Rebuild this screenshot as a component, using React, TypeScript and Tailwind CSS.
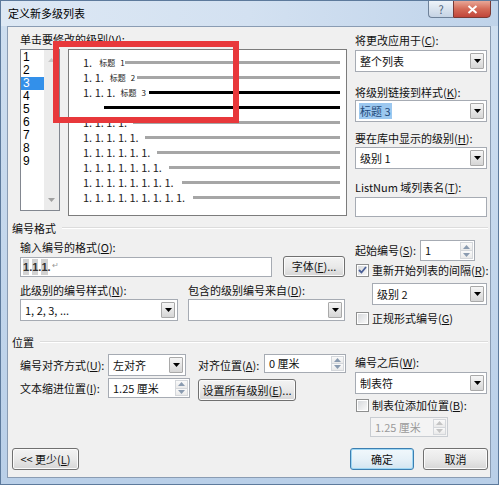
import React from "react";

const Tri = ({ up = false, color = "#000" }: { up?: boolean; color?: string }) => (
  <svg width="7" height="4" viewBox="0 0 7 4">
    {up ? <polygon points="0,4 7,4 3.5,0" fill={color} /> : <polygon points="0,0 7,0 3.5,4" fill={color} />}
  </svg>
);

const Label = ({ className = "", children }: { className?: string; children: React.ReactNode }) => (
  <div className={"flex items-center h-[16px] leading-[16px] whitespace-nowrap " + className}>{children}</div>
);

const Select = ({ className = "", children }: { className?: string; children?: React.ReactNode }) => (
  <div className={"flex items-stretch bg-white border border-[#a6abb3] " + className}>
    <div className="flex-1 flex items-center pl-[4px] overflow-hidden whitespace-nowrap">{children}</div>
    <div className="my-[2px] mr-[2px] w-[14px] flex items-center justify-center border border-[#a9a9a9] rounded-[1px] bg-linear-to-b from-[#f6f6f6] to-[#d6d6d6]">
      <Tri />
    </div>
  </div>
);

const Spin = ({ className = "", children, disabled = false }: { className?: string; children?: React.ReactNode; disabled?: boolean }) => (
  <div className={"flex items-stretch border " + (disabled ? "bg-[#f4f4f4] border-[#c9cdd2] text-[#9a9a9a] " : "bg-white border-[#a6abb3] ") + className}>
    <div className="flex-1 flex items-center pl-[4px] whitespace-nowrap">{children}</div>
    <div className="flex flex-col w-[13px] my-[1px] mr-[1px]">
      <div className="flex-1 flex items-center justify-center border border-[#d4d7db] bg-linear-to-b from-[#fafafa] to-[#eaeaea]">
        <Tri up color={disabled ? "#c4c4c4" : "#8a9bb0"} />
      </div>
      <div className="flex-1 flex items-center justify-center border border-t-0 border-[#d4d7db] bg-linear-to-b from-[#fafafa] to-[#eaeaea]">
        <Tri color={disabled ? "#c4c4c4" : "#8a9bb0"} />
      </div>
    </div>
  </div>
);

const Button = ({ className = "", children, def = false }: { className?: string; children: React.ReactNode; def?: boolean }) => (
  <div
    className={
      "flex items-center justify-center rounded-[3px] border whitespace-nowrap " +
      (def
        ? "border-[#3c7fb1] bg-linear-to-b from-[#f1f8fc] via-[#e6f1f8] to-[#d2e5f1] shadow-[inset_0_0_0_1px_#9ed6f3] "
        : "border-[#707070] bg-linear-to-b from-[#f3f3f3] via-[#e9e9e9] to-[#d6d6d6] shadow-[inset_0_0_0_1px_#fbfbfb] ") +
      className
    }
  >
    {children}
  </div>
);

const Check = ({ checked = false }: { checked?: boolean }) => (
  <div className="w-[13px] h-[13px] border border-[#8e8f8f] bg-white p-[1px] shrink-0">
    <div className="w-full h-full bg-linear-to-br from-[#d7d9dc] to-[#f8f8f8] flex items-center justify-center">
      {checked && (
        <svg width="9" height="8" viewBox="0 0 9 8">
          <path d="M1 4 L3.5 6.5 L8 1" stroke="#4a5f97" strokeWidth="1.8" fill="none" />
        </svg>
      )}
    </div>
  </div>
);

const Header = ({ className = "", children }: { className?: string; children: React.ReactNode }) => (
  <div className={"-ml-[8px] flex items-center h-[16px] " + className}>
    <span className="whitespace-nowrap">{children}</span>
    <div className="flex-1 ml-[6px] border-t border-[#dcdcdc] border-b border-b-white"></div>
  </div>
);

const PreviewRow = ({ textW, children, dark = false }: { textW: string; children?: React.ReactNode; dark?: boolean }) => (
  <div className="flex items-center h-[15px] pl-[14px] pr-[6px]">
    <div className={"flex items-center whitespace-nowrap text-[11px] text-[#222] " + textW}>{children}</div>
    <div className={"flex-1 h-[3px] " + (dark ? "bg-black" : "bg-[#a6a6a6]")}></div>
  </div>
);

export default function App() {
  const levels = ["1", "2", "3", "4", "5", "6", "7", "8", "9"];
  return (
    <div className="relative w-[499px] h-[485px] overflow-hidden bg-linear-to-b from-[#cfdff0] to-[#b9cfe8] border border-[#5d7a9c] text-[11px] text-[#111] [font-family:'Noto_Sans_CJK_SC',sans-serif]">
      {/* Title bar */}
      <div className="flex h-[25px] items-start bg-linear-to-r from-[#dde8f4] via-[#d3e1f1] to-[#bfd3ea]">
        <div className="pl-[7px] pt-[4px] leading-[16px] text-[11px] text-black">定义新多级列表</div>
        <div className="flex-1"></div>
        <div className="w-[25px] h-[18px] -mt-[1px] border border-[#6e8199] border-r-0 rounded-bl-[4px] bg-linear-to-b from-[#eef3f9] to-[#c5d3e4] flex items-center justify-center text-[11px] text-[#4a5f7a] leading-none">?</div>
        <div className="w-[38px] h-[18px] -mt-[1px] border border-[#7a3a35] rounded-br-[4px] bg-linear-to-b from-[#e8a797] via-[#d46a57] to-[#c0453a] flex items-center justify-center mr-[7px]">
          <svg width="11" height="9" viewBox="0 0 11 9">
            <path d="M1.5 1 L9.5 8 M9.5 1 L1.5 8" stroke="#fff" strokeWidth="2" />
          </svg>
        </div>
      </div>

      {/* Client area */}
      <div className="ml-[6px] w-[484px] h-[452px] bg-[#f0f0f0] border border-[#8a9cb3] pl-[12px] pr-[2px] flex flex-col">
        {/* Row A */}
        <div className="flex mt-[4px]">
          <div className="w-[327px] flex flex-col">
            <Label>单击要修改的级别(<u>V</u>):</Label>
            <div className="flex mt-[2px]">
              <div className="w-[40px] h-[162px] bg-white border border-[#828790] flex">
                <div className="flex-1 flex flex-col pt-[1px]">
                  {levels.map((l) => (
                    <div
                      key={l}
                      className={
                        "h-[13px] leading-[13px] pl-[2px] text-[12px] [font-family:'Liberation_Sans',sans-serif] " +
                        (l === "3" ? "bg-[#3390ea] text-white" : "text-black")
                      }
                    >
                      {l}
                    </div>
                  ))}
                </div>
                <div className="w-[15px] bg-[#ececec] flex flex-col items-center justify-between pt-[8px] pb-[8px]">
                  <Tri up color="#c8c8c8" />
                  <Tri color="#a0a0a0" />
                </div>
              </div>
              <div className="ml-[8px] w-[279px] h-[167px] bg-white border border-[#7c7c7c] pt-[5px]">
                <PreviewRow textW="w-[42px]">
                  <span>1.</span>
                  <span className="ml-[7px] text-[8px]">标题</span>
                  <span className="ml-[5px] text-[8px]">1</span>
                </PreviewRow>
                <PreviewRow textW="w-[54px]">
                  <span>1. 1.</span>
                  <span className="ml-[6px] text-[8px]">标题</span>
                  <span className="ml-[5px] text-[8px]">2</span>
                </PreviewRow>
                <PreviewRow textW="w-[66px]" dark>
                  <span>1. 1. 1.</span>
                  <span className="ml-[5px] text-[8px]">标题</span>
                  <span className="ml-[5px] text-[8px]">3</span>
                </PreviewRow>
                <PreviewRow textW="w-[21px]" dark />
                <PreviewRow textW="w-[50px]">1. 1. 1. 1.</PreviewRow>
                <PreviewRow textW="w-[62px]">1. 1. 1. 1. 1.</PreviewRow>
                <PreviewRow textW="w-[74px]">1. 1. 1. 1. 1. 1.</PreviewRow>
                <PreviewRow textW="w-[86px]">1. 1. 1. 1. 1. 1. 1.</PreviewRow>
                <PreviewRow textW="w-[99px]">1. 1. 1. 1. 1. 1. 1. 1.</PreviewRow>
                <PreviewRow textW="w-[110px]">1. 1. 1. 1. 1. 1. 1. 1. 1.</PreviewRow>
              </div>
            </div>
          </div>
          <div className="ml-[8px] w-[132px] flex flex-col pt-[1px]">
            <Label>将更改应用于(<u>C</u>):</Label>
            <Select className="mt-[2px] h-[22px]">整个列表</Select>
            <Label className="mt-[12px]">将级别链接到样式(<u>K</u>):</Label>
            <Select className="h-[22px]">
              <span className="bg-[#9cc8f0] text-[#234a7a] px-[1px] -ml-[1px]">标题 3</span>
            </Select>
            <Label className="mt-[8px]">要在库中显示的级别(<u>H</u>):</Label>
            <Select className="mt-[1px] h-[22px]">级别 1</Select>
            <Label className="mt-[10px]">ListNum 域列表名(<u>T</u>):</Label>
            <div className="mt-[2px] h-[20px] bg-white border border-[#a6abb3]"></div>
          </div>
        </div>

        {/* 编号格式 */}
        <Header className="mt-[3px]">编号格式</Header>
        <div className="flex">
          <div className="w-[325px] flex flex-col">
            <Label className="mt-[3px]">输入编号的格式(<u>O</u>):</Label>
            <div className="flex mt-[1px] h-[21px]">
              <div className="mt-[1px] w-[252px] h-[20px] bg-white border border-[#a6abb3] flex items-center pl-[2px] text-[11px] font-bold text-[#333] [font-family:'Liberation_Sans',sans-serif]">
                <span className="bg-[#d2d2d2]">1</span>
                <span>.</span>
                <span className="bg-[#d2d2d2]">1</span>
                <span>.</span>
                <span className="bg-[#d2d2d2]">1</span>
                <span>.</span>
                <span className="text-[8px] font-normal text-[#999] ml-[1px] -mt-[3px]">↵</span>
              </div>
              <Button className="ml-[11px] w-[62px] h-[21px]">
                字体(<u>F</u>)...
              </Button>
            </div>
            <div className="flex mt-[5px]">
              <Label className="w-[168px]">此级别的编号样式(<u>N</u>):</Label>
              <Label>包含的级别编号来自(<u>D</u>):</Label>
            </div>
            <div className="flex mt-[1px]">
              <Select className="w-[158px] h-[22px]">1, 2, 3, ...</Select>
              <Select className="ml-[10px] w-[157px] h-[22px]"></Select>
            </div>
          </div>
          <div className="ml-[10px] w-[132px] flex flex-col">
            <div className="flex items-center mt-[4px]">
              <div className="w-[65px] whitespace-nowrap">起始编号(<u>S</u>):</div>
              <Spin className="w-[55px] h-[21px]">1</Spin>
            </div>
            <div className="flex items-center h-[16px] mt-[1px] pl-[1px]">
              <Check checked />
              <span className="ml-[3px] whitespace-nowrap">重新开始列表的间隔(<u>R</u>):</span>
            </div>
            <Select className="mt-[5px] ml-[17px] h-[22px]">级别 2</Select>
            <div className="flex items-center h-[16px] mt-[5px] pl-[1px]">
              <Check />
              <span className="ml-[3px] whitespace-nowrap">正规形式编号(<u>G</u>)</span>
            </div>
          </div>
        </div>

        {/* 位置 */}
        <Header className="mt-[8px]">位置</Header>
        <div className="flex">
          <div className="w-[326px] flex flex-col">
            <div className="flex items-center mt-[4px] h-[22px]">
              <div className="w-[88px] whitespace-nowrap">编号对齐方式(<u>U</u>):</div>
              <Select className="w-[78px] h-[22px]">左对齐</Select>
              <div className="ml-[12px] w-[66px] whitespace-nowrap">对齐位置(<u>A</u>):</div>
              <Spin className="w-[82px] h-[19px] self-start">0 厘米</Spin>
            </div>
            <div className="flex items-start mt-[2px]">
              <div className="w-[88px] h-[20px] flex items-center whitespace-nowrap">文本缩进位置(<u>I</u>):</div>
              <Spin className="w-[82px] h-[20px]">1.25 厘米</Spin>
              <Button className="ml-[8px] mt-[1px] w-[98px] h-[22px]">
                设置所有级别(<u>E</u>)...
              </Button>
            </div>
          </div>
          <div className="ml-[9px] w-[132px] flex flex-col">
            <Label className="mt-[4px]">编号之后(<u>W</u>):</Label>
            <Select className="mt-[2px] h-[22px]">制表符</Select>
            <div className="flex items-center h-[16px] mt-[3px] pl-[1px]">
              <Check />
              <span className="ml-[3px] whitespace-nowrap">制表位添加位置(<u>B</u>):</span>
            </div>
            <Spin disabled className="mt-[4px] ml-[15px] w-[78px] h-[20px]">
              1.25 厘米
            </Spin>
          </div>
        </div>

        {/* Bottom buttons */}
        <div className="flex mt-[11px] -ml-[8px]">
          <Button className="w-[67px] h-[22px]">
            &lt;&lt; 更少(<u>L</u>)
          </Button>
          <div className="flex-1"></div>
          <Button def className="w-[64px] h-[22px]">
            确定
          </Button>
          <Button className="ml-[9px] w-[65px] h-[22px]">取消</Button>
        </div>
      </div>

      {/* Red annotation box */}
      <div className="absolute left-[52px] top-[40px] w-[186px] h-[82px] border-[6px] border-[#e8383b]"></div>
    </div>
  );
}
